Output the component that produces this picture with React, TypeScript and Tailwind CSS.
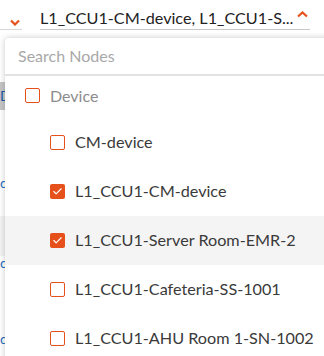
import { Check } from "lucide-react";

const nodes = [
  { label: "CM-device", checked: false, hover: false },
  { label: "L1_CCU1-CM-device", checked: true, hover: false },
  { label: "L1_CCU1-Server Room-EMR-2", checked: true, hover: true },
  { label: "L1_CCU1-Cafeteria-SS-1001", checked: false, hover: false },
  { label: "L1_CCU1-AHU Room 1-SN-1002", checked: false, hover: false },
];

function Box({ checked }: { checked: boolean }) {
  if (checked) {
    return (
      <span className="flex items-center justify-center w-[15px] h-[15px] rounded-[2px] bg-[#e6501b] shrink-0">
        <Check className="w-[11px] h-[11px] text-white" strokeWidth={2.5} />
      </span>
    );
  }
  return <span className="w-[15px] h-[15px] rounded-[2px] border border-[#e6501b] bg-white shrink-0" />;
}

export default function App() {
  return (
    <div
      className="relative w-[324px] h-[356px] overflow-hidden bg-white text-[#333]"
      style={{ fontFamily: "Lato, 'Open Sans', sans-serif" }}
    >
      {/* page behind the dropdown */}
      <div className="flex items-end h-[30px]">
        <div className="w-[22px] h-full flex items-center justify-end pr-[2px] border-b border-[#d6d6d6]">
          <svg width="10" height="7" viewBox="0 0 10 7" className="mt-[16px]">
            <path d="M1 1.5 L5 5.5 L9 1.5" fill="none" stroke="#e6501b" strokeWidth="2.2" />
          </svg>
        </div>
        <div className="ml-[18px] w-[270px] h-full flex items-center border-b border-[#c8c8c8]">
          <span className="text-[16.2px] leading-none text-[#222] mt-[7px]">L1_CCU1-CM-device, L1_CCU1-S...</span>
        </div>
        <svg width="11" height="7" viewBox="0 0 11 7" className="ml-[-13px] mb-[12px]">
          <path d="M1 5.5 L5.5 1.5 L10 5.5" fill="none" stroke="#e6501b" strokeWidth="2.2" />
        </svg>
      </div>
      <div className="w-[5px] flex flex-col text-[14px] leading-none">
        <div className="h-[52px]" />
        <div className="h-[28px] bg-[#c6c6c6] flex items-center text-[#1a5aa8]">D</div>
        <div className="h-[66px]" />
        <div className="h-[10px] text-[#2a6fc0]">d</div>
        <div className="h-[30px]" />
        <div className="h-[40px] bg-[#f3f3f3]" />
        <div className="h-[10px] text-[#2a6fc0]">d</div>
        <div className="h-[66px]" />
        <div className="h-[10px] text-[#2a6fc0]">d</div>
      </div>

      {/* dropdown panel */}
      <div className="absolute left-[5px] top-[38px] w-[340px] h-[340px] bg-white rounded-[4px] shadow-[0_0_6px_rgba(0,0,0,0.22)]">
        <div className="h-[38px] flex items-center pl-[13px] border-b-2 border-[#e2e2e2] text-[16px] text-[#a8a8a8]">
          Search Nodes
        </div>
        <div className="h-[41px] flex items-center gap-[10px] pl-[20px] pb-[2px]">
          <Box checked={false} />
          <span className="text-[16px] text-[#8c8c8c]">Device</span>
        </div>
        <div className="h-[1px]" />
        {nodes.map((n) => (
          <div
            key={n.label}
            className={`h-[49px] flex items-center gap-[10px] pl-[45px] ${n.hover ? "bg-[#f4f4f4]" : ""}`}
          >
            <Box checked={n.checked} />
            <span className="text-[16.2px] text-[#3a3a3a]">{n.label}</span>
          </div>
        ))}
      </div>
    </div>
  );
}
